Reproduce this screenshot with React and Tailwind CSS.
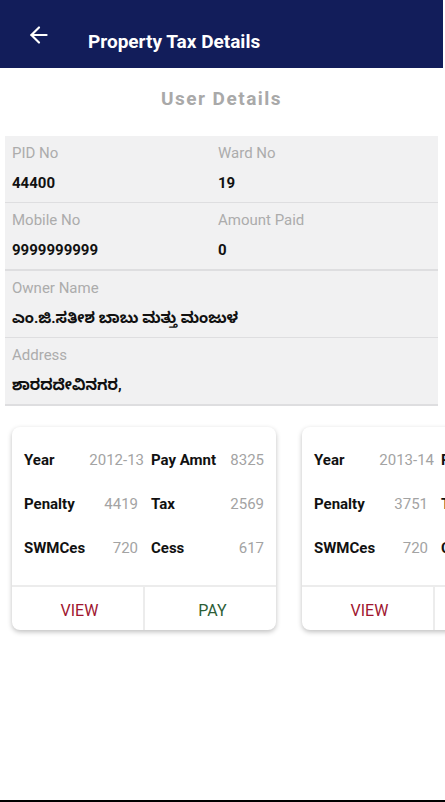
import React from "react";
import { ArrowLeft } from "lucide-react";

const font = { fontFamily: "Roboto, 'Noto Sans Kannada', 'Noto Sans', sans-serif" };

const userRows = [
  [["PID No", "44400"], ["Ward No", "19"]],
  [["Mobile No", "9999999999"], ["Amount Paid", "0"]],
  [["Owner Name", "ಎಂ.ಜಿ.ಸತೀಶ ಬಾಬು ಮತ್ತು ಮಂಜುಳ"]],
  [["Address", "ಶಾರದದೇವಿನಗರ,"]],
];

const bills = [
  { year: "2012-13", pay: "8325", penalty: "4419", tax: "2569", swm: "720", cess: "617" },
  { year: "2013-14", pay: "7612", penalty: "3751", tax: "2569", swm: "720", cess: "572" },
];

function Cell({ label, value }) {
  return (
    <div className="flex items-center justify-between h-11">
      <span className="text-[15px] font-bold text-[#111]">{label}</span>
      <span className="text-[15px] text-[#a3a3a3]">{value}</span>
    </div>
  );
}

function BillCard({ bill }) {
  return (
    <div className="w-[264px] shrink-0 bg-white rounded-lg shadow-[0_2px_5px_rgba(0,0,0,0.25)] overflow-hidden">
      <div className="pt-[11px] pb-[15px] pl-3 pr-3 grid grid-cols-[120px_1fr] gap-x-[7px]">
        <Cell label="Year" value={bill.year} />
        <Cell label="Pay Amnt" value={bill.pay} />
        <div className="pr-[6px]"><Cell label="Penalty" value={bill.penalty} /></div>
        <Cell label="Tax" value={bill.tax} />
        <div className="pr-[6px]"><Cell label="SWMCes" value={bill.swm} /></div>
        <Cell label="Cess" value={bill.cess} />
      </div>
      <div className="flex h-[45px] border-t-2 border-[#ececec]">
        <button className="flex-1 flex items-center justify-center pt-[4px] pl-[4px] text-[16px] text-[#a0162f] border-r-2 border-[#ececec]">VIEW</button>
        <button className="flex-1 flex items-center justify-center pt-[4px] pl-[4px] text-[16px] text-[#2d5e36]">PAY</button>
      </div>
    </div>
  );
}

export default function App() {
  return (
    <div className="w-[445px] h-[802px] flex flex-col bg-white overflow-hidden" style={font}>
      <header className="h-[68px] w-[443px] bg-[#121d5a] flex items-start shrink-0">
        <ArrowLeft size={26} strokeWidth={2} className="text-white ml-[26px] mt-[22px]" />
        <h1 className="ml-[36px] mt-[30px] text-[19px] font-bold text-white leading-6">Property Tax Details</h1>
      </header>

      <h2 className="w-[443px] text-center mt-[19px] text-[19px] font-bold tracking-[1.5px] text-[#a9a9a9] leading-6">User Details</h2>

      <div className="mt-[25px] ml-[5px] w-[433px] bg-[#f1f1f2]">
        {userRows.map((row, i) => (
          <div
            key={i}
            className={`grid grid-cols-[206px_1fr] px-[7px] pt-[7px] pb-[9px] border-b ${i % 2 === 1 ? "border-b-2" : ""} border-[#dedee0]`}
          >
            {row.map(([label, value]) => (
              <div key={label} className="flex flex-col gap-[10px] min-w-0">
                <span className="text-[15px] leading-5 text-[#acacac]">{label}</span>
                <span className="text-[15px] leading-5 font-bold text-[#111] whitespace-nowrap">{value}</span>
              </div>
            ))}
          </div>
        ))}
      </div>

      <div className="mt-[21px] flex gap-[26px] pl-3">
        {bills.map((b) => (
          <BillCard key={b.year} bill={b} />
        ))}
      </div>

      <div className="flex-1" />
      <div className="h-[2px] bg-black shrink-0" />
    </div>
  );
}
